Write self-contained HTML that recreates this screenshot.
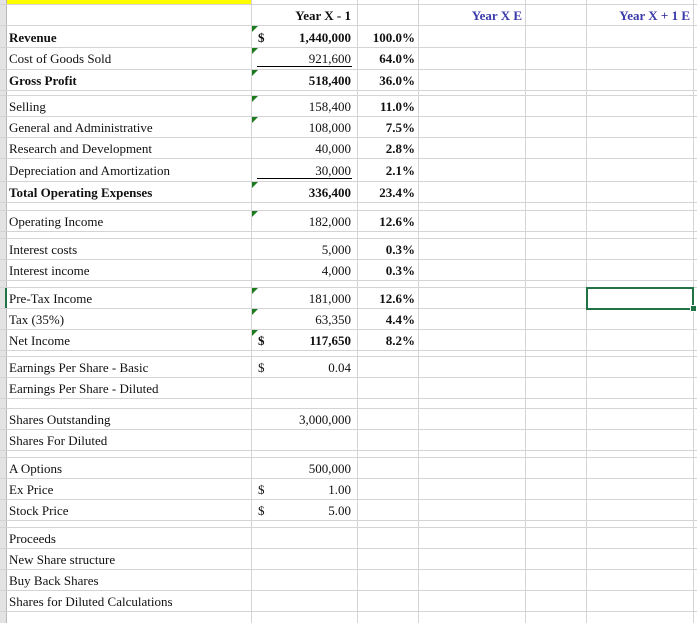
<!DOCTYPE html>
<html><head><style>
*{margin:0;padding:0}
body{width:697px;height:623px;background:#fff;position:relative;overflow:hidden;font-family:"Liberation Serif",serif;font-size:13px;color:#111}
.h{position:absolute;left:0;width:697px;height:1px;background:#d4d4d4}
.v{position:absolute;top:0;width:1px;height:623px;background:#d4d4d4}
.t{position:absolute;white-space:nowrap;height:21px;line-height:23px}
.r{text-align:right}
.b{font-weight:bold}
.tri{position:absolute;width:0;height:0;border-top:6px solid #1e7a1e;border-right:6px solid transparent;left:252px}
.u{position:absolute;left:257px;width:95px;height:1px;background:#000}
</style></head><body>
<div style="position:absolute;left:0;top:0;width:6px;height:623px;background:#e3e3e3"></div>
<div style="position:absolute;left:6px;top:0;width:1px;height:623px;background:#b8b8b8"></div>
<div style="position:absolute;left:7px;top:0;width:244px;height:5px;background:#ffff00"></div>

<div class="h" style="top:4px"></div><div class="h" style="top:25px"></div><div class="h" style="top:47px"></div><div class="h" style="top:69px"></div><div class="h" style="top:90px"></div><div class="h" style="top:95px"></div><div class="h" style="top:116px"></div><div class="h" style="top:137px"></div><div class="h" style="top:158px"></div><div class="h" style="top:181px"></div><div class="h" style="top:202px"></div><div class="h" style="top:210px"></div><div class="h" style="top:231px"></div><div class="h" style="top:238px"></div><div class="h" style="top:259px"></div><div class="h" style="top:280px"></div><div class="h" style="top:287px"></div><div class="h" style="top:308px"></div><div class="h" style="top:329px"></div><div class="h" style="top:350px"></div><div class="h" style="top:356px"></div><div class="h" style="top:377px"></div><div class="h" style="top:398px"></div><div class="h" style="top:408px"></div><div class="h" style="top:429px"></div><div class="h" style="top:450px"></div><div class="h" style="top:457px"></div><div class="h" style="top:478px"></div><div class="h" style="top:499px"></div><div class="h" style="top:520px"></div><div class="h" style="top:527px"></div><div class="h" style="top:548px"></div><div class="h" style="top:569px"></div><div class="h" style="top:590px"></div><div class="h" style="top:611px"></div>

<div class="v" style="left:251px"></div><div class="v" style="left:357px"></div><div class="v" style="left:418px"></div><div class="v" style="left:525px"></div><div class="v" style="left:586px"></div><div class="v" style="left:693px"></div>
<div style="position:absolute;left:5px;top:288px;width:2px;height:20px;background:#217346"></div>
<div style="position:absolute;left:586px;top:287px;width:104px;height:19px;border:2px solid #217346"></div>
<div style="position:absolute;left:690px;top:305px;width:5px;height:5px;background:#217346;border:1px solid #fff"></div>

<div class="t b r" style="left:260px;width:91px;top:4px">Year X - 1</div>
<div class="t b r" style="left:420px;width:102px;top:4px;color:#3a3aa8">Year X E</div>
<div class="t b r" style="left:588px;width:102px;top:4px;color:#3a3aa8">Year X + 1 E</div>

<div class="tri" style="top:26px"></div><div class="tri" style="top:48px"></div><div class="tri" style="top:70px"></div><div class="tri" style="top:96px"></div><div class="tri" style="top:117px"></div><div class="tri" style="top:182px"></div><div class="tri" style="top:211px"></div><div class="tri" style="top:288px"></div><div class="tri" style="top:309px"></div><div class="tri" style="top:330px"></div>
<div class="u" style="top:66px"></div><div class="u" style="top:178px"></div>

<div class="t b" style="left:9px;top:26px">Revenue</div><div class="t b" style="left:258px;top:26px">$</div><div class="t b r" style="left:260px;width:91px;top:26px">1,440,000</div><div class="t b r" style="left:360px;width:55px;top:26px">100.0%</div>
<div class="t" style="left:9px;top:47px">Cost of Goods Sold</div><div class="t r" style="left:260px;width:91px;top:47px">921,600</div><div class="t b r" style="left:360px;width:55px;top:47px">64.0%</div>
<div class="t b" style="left:9px;top:69px">Gross Profit</div><div class="t b r" style="left:260px;width:91px;top:69px">518,400</div><div class="t b r" style="left:360px;width:55px;top:69px">36.0%</div>
<div class="t" style="left:9px;top:95px">Selling</div><div class="t r" style="left:260px;width:91px;top:95px">158,400</div><div class="t b r" style="left:360px;width:55px;top:95px">11.0%</div>
<div class="t" style="left:9px;top:116px">General and Administrative</div><div class="t r" style="left:260px;width:91px;top:116px">108,000</div><div class="t b r" style="left:360px;width:55px;top:116px">7.5%</div>
<div class="t" style="left:9px;top:137px">Research and Development</div><div class="t r" style="left:260px;width:91px;top:137px">40,000</div><div class="t b r" style="left:360px;width:55px;top:137px">2.8%</div>
<div class="t" style="left:9px;top:159px">Depreciation and Amortization</div><div class="t r" style="left:260px;width:91px;top:159px">30,000</div><div class="t b r" style="left:360px;width:55px;top:159px">2.1%</div>
<div class="t b" style="left:9px;top:181px">Total Operating Expenses</div><div class="t b r" style="left:260px;width:91px;top:181px">336,400</div><div class="t b r" style="left:360px;width:55px;top:181px">23.4%</div>
<div class="t" style="left:9px;top:210px">Operating Income</div><div class="t r" style="left:260px;width:91px;top:210px">182,000</div><div class="t b r" style="left:360px;width:55px;top:210px">12.6%</div>
<div class="t" style="left:9px;top:238px">Interest costs</div><div class="t r" style="left:260px;width:91px;top:238px">5,000</div><div class="t b r" style="left:360px;width:55px;top:238px">0.3%</div>
<div class="t" style="left:9px;top:259px">Interest income</div><div class="t r" style="left:260px;width:91px;top:259px">4,000</div><div class="t b r" style="left:360px;width:55px;top:259px">0.3%</div>
<div class="t" style="left:9px;top:287px">Pre-Tax Income</div><div class="t r" style="left:260px;width:91px;top:287px">181,000</div><div class="t b r" style="left:360px;width:55px;top:287px">12.6%</div>
<div class="t" style="left:9px;top:308px">Tax (35%)</div><div class="t r" style="left:260px;width:91px;top:308px">63,350</div><div class="t b r" style="left:360px;width:55px;top:308px">4.4%</div>
<div class="t" style="left:9px;top:329px">Net Income</div><div class="t b" style="left:258px;top:329px">$</div><div class="t b r" style="left:260px;width:91px;top:329px">117,650</div><div class="t b r" style="left:360px;width:55px;top:329px">8.2%</div>
<div class="t" style="left:9px;top:356px">Earnings Per Share - Basic</div><div class="t" style="left:258px;top:356px">$</div><div class="t r" style="left:260px;width:91px;top:356px">0.04</div>
<div class="t" style="left:9px;top:377px">Earnings Per Share - Diluted</div>
<div class="t" style="left:9px;top:408px">Shares Outstanding</div><div class="t r" style="left:260px;width:91px;top:408px">3,000,000</div>
<div class="t" style="left:9px;top:429px">Shares For Diluted</div>
<div class="t" style="left:9px;top:457px">A Options</div><div class="t r" style="left:260px;width:91px;top:457px">500,000</div>
<div class="t" style="left:9px;top:478px">Ex Price</div><div class="t" style="left:258px;top:478px">$</div><div class="t r" style="left:260px;width:91px;top:478px">1.00</div>
<div class="t" style="left:9px;top:499px">Stock Price</div><div class="t" style="left:258px;top:499px">$</div><div class="t r" style="left:260px;width:91px;top:499px">5.00</div>
<div class="t" style="left:9px;top:527px">Proceeds</div>
<div class="t" style="left:9px;top:548px">New Share structure</div>
<div class="t" style="left:9px;top:569px">Buy Back Shares</div>
<div class="t" style="left:9px;top:590px">Shares for Diluted Calculations</div>
</body></html>
